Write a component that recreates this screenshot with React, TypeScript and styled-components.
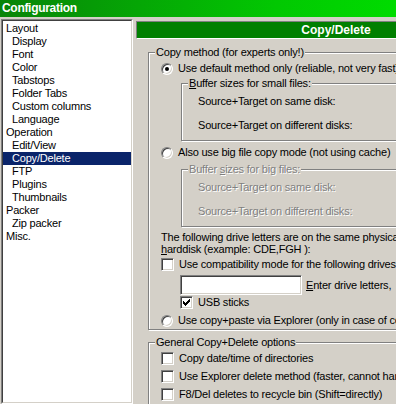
import * as React from 'react';
import styled, { createGlobalStyle, css } from 'styled-components';

const GlobalStyle = createGlobalStyle`
    html, body {
        margin: 0;
        padding: 0;
        overflow: hidden;
    }
    body {
        background: #d4d0c8;
        color: #000;
        font-family: "Liberation Sans", Arial, sans-serif;
        font-size: 11px;
        letter-spacing: -0.2px;
    }
`;

const Window = styled.div`
    width: 396px;
    height: 404px;
    display: flex;
    flex-direction: column;
    overflow: hidden;
    background: #d4d0c8;
`;

const TitleBar = styled.div`
    flex: none;
    height: 17px;
    padding-left: 2px;
    background: linear-gradient(to right, #088408, #02c802 70%, #00dc00);
    color: #fff;
    font-weight: bold;
    font-size: 12px;
    line-height: 17px;
    letter-spacing: -0.3px;
`;

const Main = styled.div`
    flex: 1;
    display: flex;
    min-height: 0;
`;

const TreeFrame = styled.div`
    flex: none;
    width: 130px;
    margin: 2px 0 0 1px;
    border: 1px solid;
    border-color: #808080 #fff #fff #808080;
    display: flex;
`;

const Tree = styled.ul`
    flex: 1;
    list-style: none;
    margin: 0;
    padding: 1px 0 0;
    background: #fff;
    border: 1px solid;
    border-color: #404040 #d4d0c8 #d4d0c8 #404040;
`;

const TreeItem = styled.li<{ $level: number; $selected?: boolean }>`
    height: 13px;
    line-height: 13px;
    padding-left: ${p => (p.$level ? 9 : 3)}px;
    white-space: nowrap;
    ${p =>
        p.$selected &&
        css`
            background: #0a246a;
            color: #fff;
        `}
`;

const Panel = styled.div`
    flex: none;
    width: 400px;
    padding: 4px 0 0 3px;
`;

const Header = styled.div`
    height: 16px;
    border: 1px solid;
    border-color: #808080 #fff #fff #808080;
    background: #008000;
    color: #fff;
    font-weight: bold;
    font-size: 12px;
    line-height: 16px;
    letter-spacing: 0;
    text-align: center;
`;

const Group = styled.div<{ $mt: number; $ml: number; $pt: number; $pb: number; $pl: number }>`
    position: relative;
    margin: ${p => p.$mt}px 12px 0 ${p => p.$ml}px;
    padding: ${p => p.$pt}px 0 ${p => p.$pb}px ${p => p.$pl}px;
    border: 1px solid #808080;
    box-shadow: 1px 1px 0 #fff, inset 1px 1px 0 #fff;
`;

const disabledText = css`
    color: #808080;
    text-shadow: 1px 1px 0 #fff;
`;

const Legend = styled.span<{ $disabled?: boolean }>`
    position: absolute;
    top: -7px;
    left: 6px;
    padding: 0 1px;
    background: #d4d0c8;
    line-height: 13px;
    white-space: nowrap;
    ${p => p.$disabled && disabledText}
`;

const Row = styled.div<{ $mt?: number; $ml?: number; $disabled?: boolean }>`
    display: flex;
    align-items: center;
    gap: 5px;
    height: 13px;
    line-height: 13px;
    margin-top: ${p => p.$mt ?? 0}px;
    margin-left: ${p => p.$ml ?? 0}px;
    white-space: nowrap;
    ${p => p.$disabled && disabledText}
`;

const Note = styled.div<{ $mt: number }>`
    margin-top: ${p => p.$mt}px;
    line-height: 12px;
    white-space: nowrap;
`;

const sunken = css`
    box-sizing: border-box;
    background: #fff;
    border: 1px solid;
    border-color: #808080 #fff #fff #808080;
    box-shadow: inset 1px 1px 0 #404040, inset -1px -1px 0 #d4d0c8;
`;

const RadioCircle = styled.span<{ $checked?: boolean }>`
    ${sunken};
    flex: none;
    position: relative;
    width: 12px;
    height: 12px;
    border-radius: 50%;
    ${p =>
        p.$checked &&
        css`
            &::after {
                content: '';
                position: absolute;
                inset: 0;
                margin: auto;
                width: 4px;
                height: 4px;
                border-radius: 50%;
                background: #000;
            }
        `}
`;

const CheckBox = styled.span`
    ${sunken};
    flex: none;
    width: 13px;
    height: 13px;
    display: flex;
    align-items: center;
    justify-content: center;
`;

const InputRow = styled.div`
    display: flex;
    align-items: center;
    gap: 4px;
    margin: 4px 0 0 19px;
    height: 20px;
    white-space: nowrap;
`;

const DriveInput = styled.input`
    ${sunken};
    width: 122px;
    height: 20px;
    margin: 0;
    padding: 2px 3px;
    font: inherit;
    outline: none;
`;

const Check = ({ checked }: { checked?: boolean }) => (
    <CheckBox>
        {checked && (
            <svg width="7" height="7" viewBox="0 0 7 7" shapeRendering="crispEdges">
                <path
                    d="M6 0h1v1h-1z M5 1h2v1h-2z M0 2h1v1h-1z M4 2h3v1h-3z M0 3h2v1h-2z M3 3h3v1h-3z M0 4h5v1h-5z M1 5h3v1h-3z M2 6h1v1h-1z"
                    fill="#000"
                />
            </svg>
        )}
    </CheckBox>
);

const treeItems: [string, number][] = [
    ['Layout', 0],
    ['Display', 1],
    ['Font', 1],
    ['Color', 1],
    ['Tabstops', 1],
    ['Folder Tabs', 1],
    ['Custom columns', 1],
    ['Language', 1],
    ['Operation', 0],
    ['Edit/View', 1],
    ['Copy/Delete', 1],
    ['FTP', 1],
    ['Plugins', 1],
    ['Thumbnails', 1],
    ['Packer', 0],
    ['Zip packer', 1],
    ['Misc.', 0]
];

const App = () => {
    return (
        <Window>
            <GlobalStyle />
            <TitleBar>Configuration</TitleBar>
            <Main>
                <TreeFrame>
                    <Tree>
                        {treeItems.map(([label, level]) => (
                            <TreeItem key={label} $level={level} $selected={label === 'Copy/Delete'}>
                                {label}
                            </TreeItem>
                        ))}
                    </Tree>
                </TreeFrame>
                <Panel>
                    <Header>Copy/Delete</Header>
                    <Group $mt={13} $ml={12} $pt={9} $pb={2} $pl={12}>
                        <Legend>Copy method (for experts only!)</Legend>
                        <Row>
                            <RadioCircle $checked />
                            Use default method only (reliable, not very fast)
                        </Row>
                        <Group $mt={8} $ml={20} $pt={11} $pb={8} $pl={16}>
                            <Legend>
                                <u>B</u>uffer sizes for small files:
                            </Legend>
                            <Row>Source+Target on same disk:</Row>
                            <Row $mt={11}>Source+Target on different disks:</Row>
                        </Group>
                        <Row $mt={5}>
                            <RadioCircle />
                            Also use big file copy mode (not using cache)
                        </Row>
                        <Group $mt={10} $ml={20} $pt={11} $pb={8} $pl={16}>
                            <Legend $disabled>
                                Buffer <u>s</u>izes for big files:
                            </Legend>
                            <Row $disabled>Source+Target on same disk:</Row>
                            <Row $mt={11} $disabled>
                                Source+Target on different disks:
                            </Row>
                        </Group>
                        <Note $mt={4}>
                            The following drive letters are on the same physical
                            <br />
                            <u>h</u>arddisk (example: CDE,FGH ):
                        </Note>
                        <Row $mt={3}>
                            <Check />
                            Use compatibility mode for the following drives:
                        </Row>
                        <InputRow>
                            <DriveInput defaultValue="" />
                            <span>
                                <u>E</u>nter drive letters,
                            </span>
                        </InputRow>
                        <Row $mt={1} $ml={19}>
                            <Check checked />
                            USB sticks
                        </Row>
                        <Row $mt={5}>
                            <RadioCircle />
                            Use copy+paste via Explorer (only in case of copy problems)
                        </Row>
                    </Group>
                    <Group $mt={12} $ml={12} $pt={9} $pb={4} $pl={12}>
                        <Legend>General Copy+Delete options</Legend>
                        <Row>
                            <Check />
                            Copy date/time of directories
                        </Row>
                        <Row $mt={5}>
                            <Check />
                            Use Explorer delete method (faster, cannot handle long names)
                        </Row>
                        <Row $mt={5}>
                            <Check />
                            F8/Del deletes to recycle bin (Shift=directly)
                        </Row>
                    </Group>
                </Panel>
            </Main>
        </Window>
    );
};

export default App;
